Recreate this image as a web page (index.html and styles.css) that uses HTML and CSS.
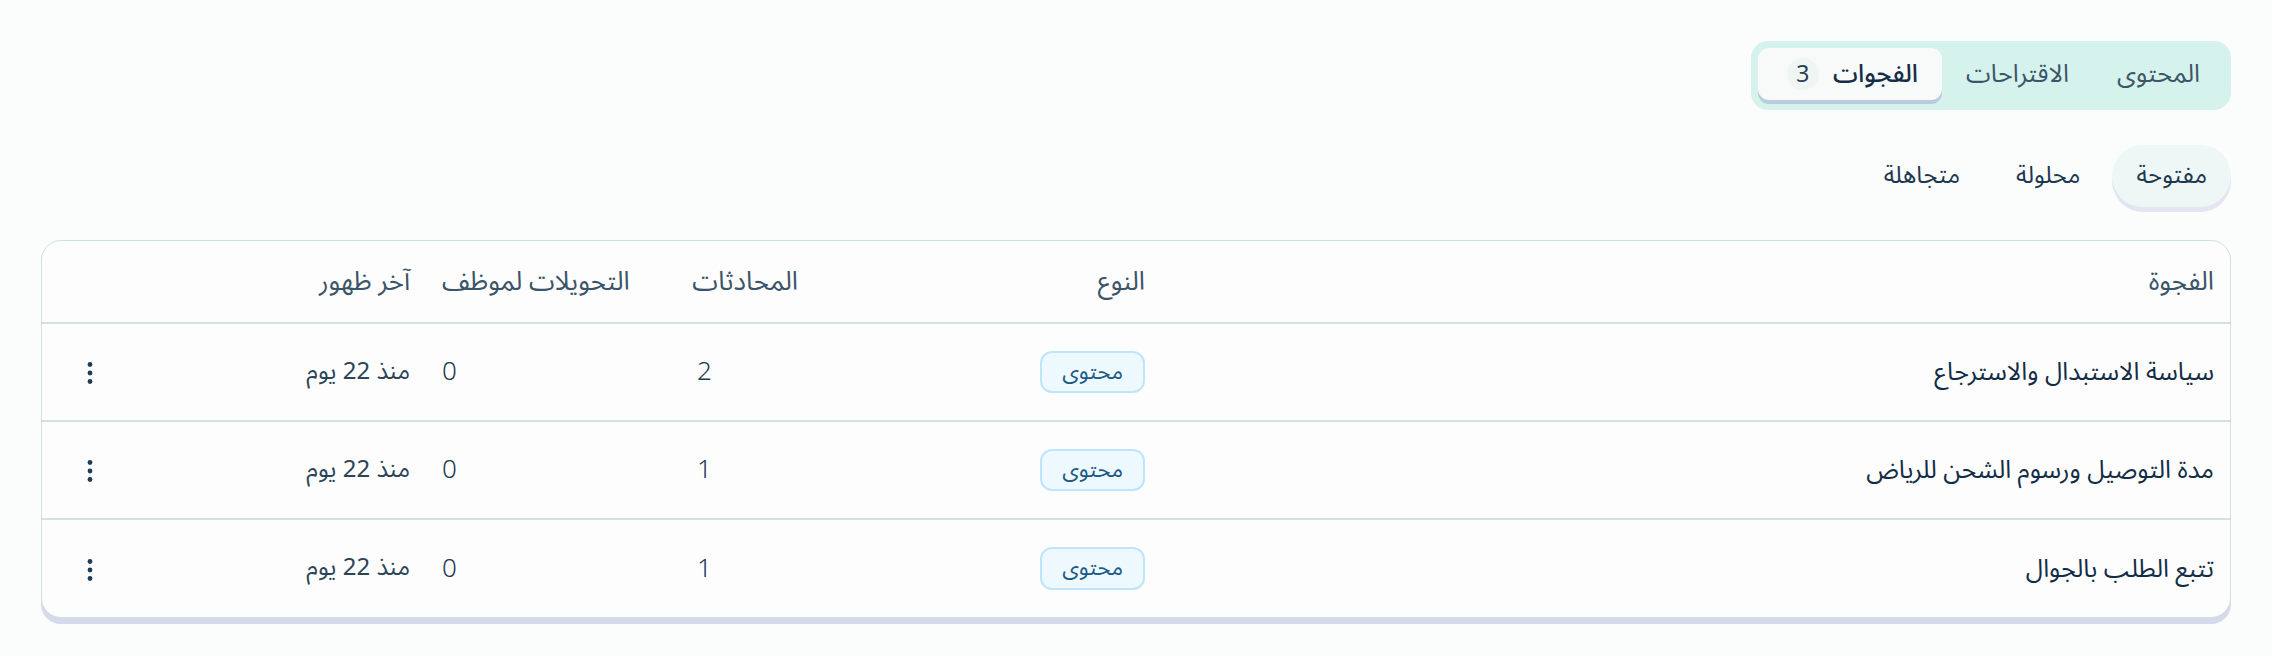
FILE: index.html
```html
<!DOCTYPE html>
<html lang="ar" dir="rtl">
<head>
  <meta charset="UTF-8">
  <meta name="viewport" content="width=device-width, initial-scale=1.0">
  <link rel="stylesheet" href="styles.css">
  <title>الفجوات</title>
</head>
<body class="page">
  <nav class="tabs">
    <button class="tabs__item">المحتوى</button>
    <button class="tabs__item">الاقتراحات</button>
    <button class="tabs__item tabs__item_active">
      <span>الفجوات</span>
      <span class="tabs__count">3</span>
    </button>
  </nav>

  <div class="filters">
    <button class="filters__item filters__item_active">مفتوحة</button>
    <button class="filters__item">محلولة</button>
    <button class="filters__item">متجاهلة</button>
  </div>

  <section class="card">
    <table class="table">
      <colgroup>
        <col class="table__col_gap">
        <col class="table__col_type">
        <col class="table__col_chats">
        <col class="table__col_handoffs">
        <col class="table__col_seen">
        <col class="table__col_actions">
      </colgroup>
      <thead>
        <tr>
          <th>الفجوة</th>
          <th>النوع</th>
          <th class="table__num">المحادثات</th>
          <th class="table__num">التحويلات لموظف</th>
          <th>آخر ظهور</th>
          <th></th>
        </tr>
      </thead>
      <tbody>
        <tr>
          <td class="table__title">سياسة الاستبدال والاسترجاع</td>
          <td><span class="tag">محتوى</span></td>
          <td class="table__num">2</td>
          <td class="table__num">0</td>
          <td class="table__seen">منذ 22 يوم</td>
          <td class="table__actions"><button class="more" aria-label="المزيد"><svg viewBox="0 0 24 24" width="24" height="24"><circle cx="12" cy="3.5" r="2.4"/><circle cx="12" cy="12" r="2.4"/><circle cx="12" cy="20.5" r="2.4"/></svg></button></td>
        </tr>
        <tr>
          <td class="table__title">مدة التوصيل ورسوم الشحن للرياض</td>
          <td><span class="tag">محتوى</span></td>
          <td class="table__num">1</td>
          <td class="table__num">0</td>
          <td class="table__seen">منذ 22 يوم</td>
          <td class="table__actions"><button class="more" aria-label="المزيد"><svg viewBox="0 0 24 24" width="24" height="24"><circle cx="12" cy="3.5" r="2.4"/><circle cx="12" cy="12" r="2.4"/><circle cx="12" cy="20.5" r="2.4"/></svg></button></td>
        </tr>
        <tr>
          <td class="table__title">تتبع الطلب بالجوال</td>
          <td><span class="tag">محتوى</span></td>
          <td class="table__num">1</td>
          <td class="table__num">0</td>
          <td class="table__seen">منذ 22 يوم</td>
          <td class="table__actions"><button class="more" aria-label="المزيد"><svg viewBox="0 0 24 24" width="24" height="24"><circle cx="12" cy="3.5" r="2.4"/><circle cx="12" cy="12" r="2.4"/><circle cx="12" cy="20.5" r="2.4"/></svg></button></td>
        </tr>
      </tbody>
    </table>
  </section>
</body>
</html>
```

FILE: styles.css
```css
* {
  box-sizing: border-box;
}

html, .page {
  margin: 0;
  background: #fbfcfc;
  font-family: "Noto Sans Arabic", "Noto Sans", "DejaVu Sans", sans-serif;
  color: #17334b;
}

.page {
  padding: 41px;
}

button {
  font: inherit;
  color: inherit;
  border: none;
  background: none;
  cursor: pointer;
}

/* top tabs */
.tabs {
  display: flex;
  width: max-content;
  padding: 7px 7px 10px;
  background: #d6f2ec;
  border-radius: 17px;
}

.tabs__item {
  display: flex;
  align-items: center;
  gap: 14px;
  height: 52px;
  padding: 0 24px;
  border-radius: 11px;
  font-size: 25px;
  line-height: 1;
  color: #3b5669;
}

.tabs__item_active {
  padding-left: 29px;
  background: #f8f9f9;
  color: #132e46;
  font-weight: 500;
  box-shadow: 0 4px 0 #b9cbdd;
}

.tabs__count {
  display: flex;
  align-items: center;
  justify-content: center;
  width: 32px;
  height: 32px;
  border-radius: 50%;
  background: #eef5f3;
  font-weight: 400;
  font-size: 23px;
  color: #2a4258;
}

/* status filters */
.filters {
  display: flex;
  gap: 8px;
  margin-top: 35px;
}

.filters__item {
  height: 62px;
  padding: 0 24px;
  border-radius: 31px;
  font-size: 24px;
  line-height: 1;
  color: #1c374f;
}

.filters__item_active {
  background: #eef6f6;
  box-shadow: 0 5px 0 #e5e5f1;
}

/* table */
.card {
  margin-top: 33px;
  background: #fdfdfe;
  border: 1.5px solid #cfe1df;
  border-radius: 20px;
  box-shadow: 0 6px 0 #d5d9ec;
  overflow: hidden;
}

.table {
  width: 100%;
  border-collapse: collapse;
  table-layout: fixed;
}

.table__col_gap { width: 1069px; }
.table__col_type { width: 347px; }
.table__col_chats { width: 133px; }
.table__col_handoffs { width: 255px; }
.table__col_seen { width: 288px; }
.table__col_actions { width: 96px; }

.table th,
.table td {
  padding: 0 16px;
  text-align: right;
  white-space: nowrap;
  line-height: 1.2;
}

.table th {
  height: 82px;
  font-size: 26px;
  font-weight: 400;
  color: #3b5468;
  border-bottom: 2px solid #d0e2e0;
}

.table td {
  height: 98px;
  font-size: 25px;
  border-bottom: 2px solid #d0e2e0;
}

.table tbody tr:last-child td {
  border-bottom: none;
}

.table .table__num {
  text-align: left;
}

.table td.table__num {
  font-size: 26px;
  font-weight: 300;
  color: #1d3a55;
}

.table__title {
  color: #132d45;
}

.table .table__seen {
  font-size: 24px;
  color: #2c4458;
}

.table .table__actions {
  text-align: center;
}

.tag {
  display: inline-block;
  padding: 6px 20px;
  border: 2px solid #bfe5fa;
  border-radius: 12px;
  background: #eef8ff;
  font-size: 22px;
  color: #1b5a84;
}

.more {
  display: inline-flex;
  padding: 0;
  vertical-align: middle;
  fill: #1f3b55;
}

.more svg {
  width: 24px;
  height: 24px;
}
```
